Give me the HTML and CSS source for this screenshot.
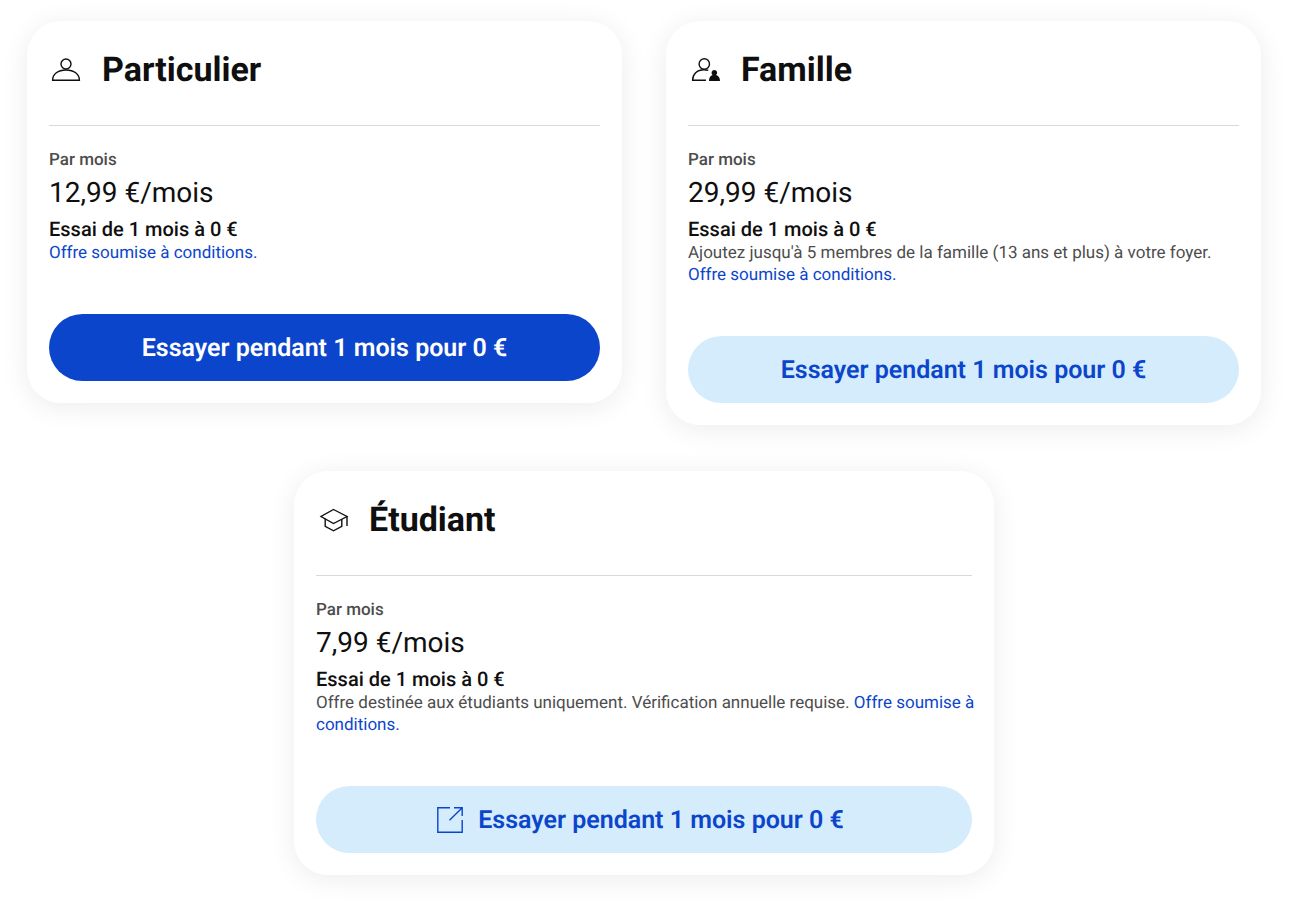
FILE: index.html
```html
<!DOCTYPE html>
<html lang="fr">
<head>
<meta charset="utf-8">
<meta name="viewport" content="width=device-width, initial-scale=1">
<title>Abonnements</title>
<link rel="stylesheet" href="styles.css">
</head>
<body>
<main class="plans">
  <div class="plans-row">
    <article class="card">
      <header class="card-header">
        <svg class="card-icon" viewBox="0 0 34 34" aria-hidden="true"><circle cx="17" cy="11" r="5"/><path d="M3.600 27.300h26.800C30.400 21 25 17 17 17S3.600 21 3.600 27.300z"/></svg>
        <h2 class="card-title">Particulier</h2>
      </header>
      <p class="period">Par mois</p>
      <p class="price">12,99 €/mois</p>
      <p class="trial">Essai de 1 mois à 0 €</p>
      <p class="terms"><a href="#">Offre soumise à conditions.</a></p>
      <button class="cta cta-primary" type="button">Essayer pendant 1 mois pour 0 €</button>
    </article>
    <article class="card">
      <header class="card-header">
        <svg class="card-icon" viewBox="0 0 34 34" aria-hidden="true"><circle cx="16.300" cy="11" r="5.200"/><path d="M20.300 17.300C19 16.900 17.600 16.700 16 16.700 9 16.700 4.600 21.300 4.600 27.300H18"/><path class="solid" d="M26.300 17a2.800 2.800 0 0 1 1.800 5c2.300.7 3.900 2.800 3.900 6H21c0-3.200 1.400-5.300 3.600-6a2.800 2.800 0 0 1 1.700-5z"/></svg>
        <h2 class="card-title">Famille</h2>
      </header>
      <p class="period">Par mois</p>
      <p class="price">29,99 €/mois</p>
      <p class="trial">Essai de 1 mois à 0 €</p>
      <p class="terms">Ajoutez jusqu'à 5 membres de la famille (13 ans et plus) à votre foyer. <a href="#">Offre soumise à conditions.</a></p>
      <button class="cta cta-tonal" type="button">Essayer pendant 1 mois pour 0 €</button>
    </article>
  </div>
  <article class="card card-wide">
    <header class="card-header">
      <svg class="card-icon" viewBox="0 0 34 34" aria-hidden="true"><path d="M17.500 6.500 31 13.500 17.500 20.500 5 13.500z"/><path d="M9.200 15.800v7.500l8.300 4.500 8.300-4.500v-7.100M31 13.500v9.500"/></svg>
      <h2 class="card-title">Étudiant</h2>
    </header>
    <p class="period">Par mois</p>
    <p class="price">7,99 €/mois</p>
    <p class="trial">Essai de 1 mois à 0 €</p>
    <p class="terms">Offre destinée aux étudiants uniquement. Vérification annuelle requise. <a href="#">Offre soumise à conditions.</a></p>
    <button class="cta cta-tonal cta-external" type="button"><svg class="cta-icon" viewBox="0 0 26 26" aria-hidden="true"><path d="M13 .8H.8v24.400h24.400V13M17 .8h8.200V9M25.200.8 12.500 13.300"/></svg>Essayer pendant 1 mois pour 0 €</button>
  </article>
</main>
</body>
</html>
```
FILE: styles.css
```css
* {
  box-sizing: border-box;
}

body {
  margin: 0;
  background: #fff;
  color: #0f0f0f;
  font-family: Roboto, "Liberation Sans", sans-serif;
  text-rendering: geometricPrecision;
}

h2,
p {
  margin: 0;
}

.plans {
  display: flex;
  flex-direction: column;
  align-items: center;
  gap: 46px;
  padding: 21px 39px 43px 27px;
}

.plans-row {
  display: grid;
  grid-template-columns: repeat(2, minmax(0, 1fr));
  align-items: start;
  gap: 44px;
  width: 100%;
}

.card {
  display: flex;
  flex-direction: column;
  padding: 22px;
  border-radius: 34px;
  background: #fff;
  box-shadow: 0 4px 28px rgba(0, 0, 0, 0.08);
}

.card-wide {
  width: 100%;
  max-width: 700px;
}

.card-header {
  display: flex;
  align-items: center;
  gap: 19px;
  padding: 2px 0 30px;
  border-bottom: 1px solid #d9d9d9;
  margin-bottom: 23px;
}

.card-icon {
  width: 34px;
  height: 34px;
  fill: none;
  stroke: #0f0f0f;
  stroke-width: 1.4;
}

.card-icon .solid {
  fill: #0f0f0f;
  stroke: none;
}

.card-title {
  font-size: 34px;
  font-weight: 700;
  line-height: 50px;
}

.period {
  color: #4d4d4d;
  font-size: 17px;
  font-weight: 500;
  line-height: 22px;
}

.price {
  margin-top: 5px;
  font-size: 28px;
  line-height: 34px;
}

.trial {
  margin-top: 7px;
  font-size: 20px;
  font-weight: 500;
  line-height: 24px;
}

.terms {
  margin-top: 1px;
  margin-right: -8px;
  color: #4d4d4d;
  font-size: 17px;
  line-height: 22px;
}

.terms a {
  color: #0b45cc;
  text-decoration: none;
}

.cta {
  display: flex;
  align-items: center;
  justify-content: center;
  gap: 15px;
  width: 100%;
  min-height: 67px;
  margin-top: 50px;
  padding: 1px 22px 0;
  border: 0;
  border-radius: 34px;
  font-family: inherit;
  font-size: 25px;
  font-weight: 600;
  text-rendering: inherit;
  cursor: pointer;
}

.cta-primary {
  background: #0b45cc;
  color: #fff;
}

.cta-tonal {
  background: #d5ecfc;
  color: #0b45cc;
}

.cta-external {
  padding-right: 29px;
}

.cta-icon {
  width: 26px;
  height: 26px;
  fill: none;
  stroke: currentColor;
  stroke-width: 1.4;
}
```
